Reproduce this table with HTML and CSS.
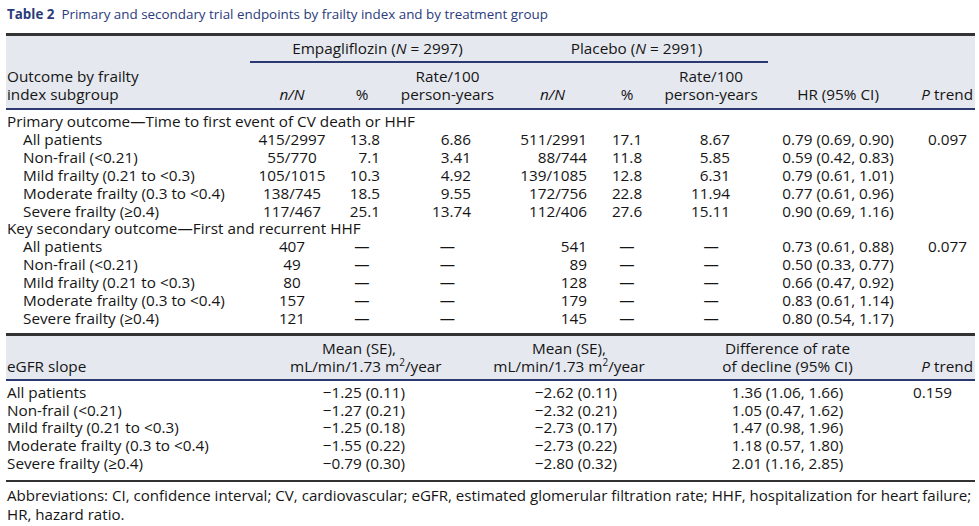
FILE: index.html
```html
<!DOCTYPE html>
<html lang="en">
<head>
<meta charset="utf-8">
<title>Table 2</title>
<link rel="stylesheet" href="styles.css">
</head>
<body>
<div class="page">
  <p class="caption"><b>Table 2</b>Primary and secondary trial endpoints by frailty index and by treatment group</p>

  <table class="tbl main">
    <colgroup>
      <col class="w-lbl"><col class="w-en"><col class="w-ep"><col class="w-er">
      <col class="w-pn"><col class="w-pp"><col class="w-pr"><col class="w-hr"><col class="w-pt">
    </colgroup>
    <thead>
      <tr class="span-row">
        <th></th>
        <th colspan="3" class="grp grp-e"><span class="spanner">Empagliflozin (<i>N</i> = 2997)</span></th>
        <th colspan="3" class="grp grp-p"><span class="spanner">Placebo (<i>N</i> = 2991)</span></th>
        <th></th>
        <th></th>
      </tr>
      <tr class="col-row">
        <th class="lbl">Outcome by frailty<br>index subgroup</th>
        <th class="c"><i>n/N</i></th>
        <th class="c">%</th>
        <th class="c">Rate/100<br>person-years</th>
        <th class="c"><i>n/N</i></th>
        <th class="c">%</th>
        <th class="c">Rate/100<br>person-years</th>
        <th class="c">HR (95% CI)</th>
        <th class="pt-h"><i>P</i> trend</th>
      </tr>
    </thead>
    <tbody>
      <tr class="first">
        <td class="lbl" colspan="9">Primary outcome—Time to first event of CV death or HHF</td>
      </tr>
      <tr><td class="lbl sub">All patients</td><td class="c">415/2997</td><td class="ep">13.8</td><td class="er">6.86</td><td class="pn">511/2991</td><td class="c">17.1</td><td class="pr">8.67</td><td class="c">0.79 (0.69, 0.90)</td><td class="pt">0.097</td></tr>
      <tr><td class="lbl sub">Non-frail (&lt;0.21)</td><td class="c">55/770</td><td class="ep">7.1</td><td class="er">3.41</td><td class="pn">88/744</td><td class="c">11.8</td><td class="pr">5.85</td><td class="c">0.59 (0.42, 0.83)</td><td class="pt"></td></tr>
      <tr><td class="lbl sub">Mild frailty (0.21 to &lt;0.3)</td><td class="c">105/1015</td><td class="ep">10.3</td><td class="er">4.92</td><td class="pn">139/1085</td><td class="c">12.8</td><td class="pr">6.31</td><td class="c">0.79 (0.61, 1.01)</td><td class="pt"></td></tr>
      <tr><td class="lbl sub">Moderate frailty (0.3 to &lt;0.4)</td><td class="c">138/745</td><td class="ep">18.5</td><td class="er">9.55</td><td class="pn">172/756</td><td class="c">22.8</td><td class="pr">11.94</td><td class="c">0.77 (0.61, 0.96)</td><td class="pt"></td></tr>
      <tr><td class="lbl sub">Severe frailty (≥0.4)</td><td class="c">117/467</td><td class="ep">25.1</td><td class="er">13.74</td><td class="pn">112/406</td><td class="c">27.6</td><td class="pr">15.11</td><td class="c">0.90 (0.69, 1.16)</td><td class="pt"></td></tr>
      <tr>
        <td class="lbl" colspan="9">Key secondary outcome—First and recurrent HHF</td>
      </tr>
      <tr><td class="lbl sub">All patients</td><td class="c">407</td><td class="c">—</td><td class="c">—</td><td class="pn">541</td><td class="c">—</td><td class="c">—</td><td class="c">0.73 (0.61, 0.88)</td><td class="pt">0.077</td></tr>
      <tr><td class="lbl sub">Non-frail (&lt;0.21)</td><td class="c">49</td><td class="c">—</td><td class="c">—</td><td class="pn">89</td><td class="c">—</td><td class="c">—</td><td class="c">0.50 (0.33, 0.77)</td><td class="pt"></td></tr>
      <tr><td class="lbl sub">Mild frailty (0.21 to &lt;0.3)</td><td class="c">80</td><td class="c">—</td><td class="c">—</td><td class="pn">128</td><td class="c">—</td><td class="c">—</td><td class="c">0.66 (0.47, 0.92)</td><td class="pt"></td></tr>
      <tr><td class="lbl sub">Moderate frailty (0.3 to &lt;0.4)</td><td class="c">157</td><td class="c">—</td><td class="c">—</td><td class="pn">179</td><td class="c">—</td><td class="c">—</td><td class="c">0.83 (0.61, 1.14)</td><td class="pt"></td></tr>
      <tr class="last"><td class="lbl sub">Severe frailty (≥0.4)</td><td class="c">121</td><td class="c">—</td><td class="c">—</td><td class="pn">145</td><td class="c">—</td><td class="c">—</td><td class="c">0.80 (0.54, 1.17)</td><td class="pt"></td></tr>
    </tbody>
  </table>

  <table class="tbl egfr">
    <colgroup>
      <col class="g-lbl"><col class="g-e"><col class="g-p"><col class="g-d"><col class="g-pt">
    </colgroup>
    <thead>
      <tr>
        <th class="lbl">eGFR slope</th>
        <th class="c g-eh">Mean (SE),<br>mL/min/1.73 m<sup>2</sup>/year</th>
        <th class="c g-ph">Mean (SE),<br>mL/min/1.73 m<sup>2</sup>/year</th>
        <th class="c">Difference of rate<br>of decline (95% CI)</th>
        <th class="pt-h"><i>P</i> trend</th>
      </tr>
    </thead>
    <tbody>
      <tr class="first"><td class="lbl">All patients</td><td class="c ge">−1.25 (0.11)</td><td class="c">−2.62 (0.11)</td><td class="c">1.36 (1.06, 1.66)</td><td class="gpt">0.159</td></tr>
      <tr><td class="lbl">Non-frail (&lt;0.21)</td><td class="c ge">−1.27 (0.21)</td><td class="c">−2.32 (0.21)</td><td class="c">1.05 (0.47, 1.62)</td><td class="gpt"></td></tr>
      <tr><td class="lbl">Mild frailty (0.21 to &lt;0.3)</td><td class="c ge">−1.25 (0.18)</td><td class="c">−2.73 (0.17)</td><td class="c">1.47 (0.98, 1.96)</td><td class="gpt"></td></tr>
      <tr><td class="lbl">Moderate frailty (0.3 to &lt;0.4)</td><td class="c ge">−1.55 (0.22)</td><td class="c">−2.73 (0.22)</td><td class="c">1.18 (0.57, 1.80)</td><td class="gpt"></td></tr>
      <tr class="last"><td class="lbl">Severe frailty (≥0.4)</td><td class="c ge">−0.79 (0.30)</td><td class="c">−2.80 (0.32)</td><td class="c">2.01 (1.16, 2.85)</td><td class="gpt"></td></tr>
    </tbody>
  </table>

  <p class="notes"><span class="nl">Abbreviations: CI, confidence interval; CV, cardiovascular; eGFR, estimated glomerular filtration rate; HHF, hospitalization for heart failure;</span><br>HR, hazard ratio.</p>
</div>
</body>
</html>
```

FILE: styles.css
```css
html, body {
  margin: 0;
  padding: 0;
  background: #ffffff;
}

body {
  font-family: "Open Sans", "Noto Sans", sans-serif;
  color: #151515;
}

.page {
  width: 969px;
  padding: 5px 4px 0 6px;
}

.caption {
  margin: 0 0 10px 1px;
  font-size: 13.4px;
  line-height: 18px;
  color: #2a3b7c;
}

.caption b {
  font-weight: 700;
  margin-right: 7px;
}

.tbl {
  width: 969px;
  border-collapse: collapse;
  table-layout: fixed;
  font-size: 15.3px;
  line-height: 18px;
}

.tbl th,
.tbl td {
  padding: 0;
  font-weight: normal;
  white-space: nowrap;
}

.tbl thead {
  background: #e5e8ef;
}

/* column widths, main table */
.w-lbl { width: 244px; }
.w-en { width: 84px; }
.w-ep { width: 56px; }
.w-er { width: 115px; }
.w-pn { width: 95px; }
.w-pp { width: 54px; }
.w-pr { width: 114px; }
.w-hr { width: 140px; }
.w-pt { width: 67px; }

.main {
  border-top: 3px solid #333333;
}

.main thead tr.col-row {
  border-bottom: 2px solid #2c3870;
}

.span-row th {
  padding-top: 3px;
  text-align: center;
}

.grp-e { padding: 3px 8px 0; }
.grp-p { padding: 3px 13px 0; }

.spanner {
  display: block;
  padding-bottom: 4px;
  border-bottom: 2px solid #2c3870;
}

.col-row th {
  vertical-align: bottom;
  padding-top: 4px;
  padding-bottom: 5px;
}

.lbl {
  text-align: left;
  padding-left: 1px !important;
}

.lbl.sub {
  padding-left: 17px !important;
}

.c { text-align: center; }
.ep { text-align: right; padding-right: 10px !important; }
.er { text-align: right; padding-right: 34px !important; }
.pn { text-align: right; padding-right: 13px !important; }
.pr { text-align: right; padding-right: 38px !important; }
.pt { text-align: right; padding-right: 8px !important; }
.pt-h { text-align: right; padding-right: 2px !important; }

.main tbody td { line-height: 17.9px; }
.main tbody tr.first td { padding-top: 3px; }
.main tbody tr.last td { padding-bottom: 5px; }

/* eGFR table */
.g-lbl { width: 284px; }
.g-e { width: 162px; }
.g-p { width: 248px; }
.g-d { width: 175px; }
.g-pt { width: 100px; }

.egfr {
  border-top: 3px solid #333333;
  border-bottom: 2px solid #333333;
}

.egfr thead tr {
  border-bottom: 2px solid #2c3870;
}

.egfr thead th {
  vertical-align: bottom;
  padding-top: 3px;
  padding-bottom: 4px;
}

.egfr .g-eh { padding-right: 24px; }
.egfr .g-ph { padding-right: 14px; }
.egfr .ge { padding-right: 14px; }

.gpt { text-align: right; padding-right: 23px !important; }

.egfr tbody td { line-height: 17.75px; }
.egfr tbody tr.first td { padding-top: 3px; }
.egfr tbody tr.last td { padding-bottom: 7px; }

sup {
  font-size: 10px;
  line-height: 0;
  vertical-align: 6px;
}

.notes {
  margin: 4px -4px 0 1px;
  font-size: 15.1px;
  line-height: 19px;
}

.nl {
  white-space: nowrap;
}
```
